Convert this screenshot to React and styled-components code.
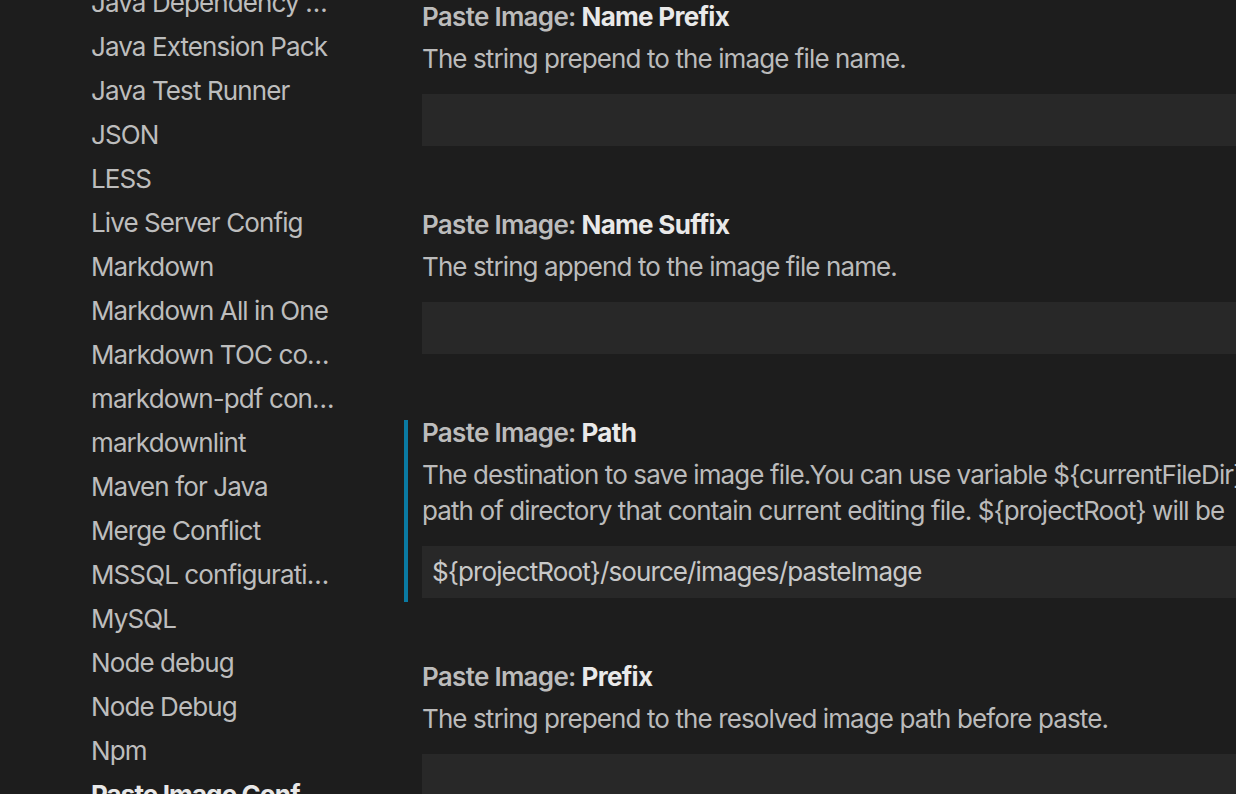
import React from "react";
import styled, { createGlobalStyle } from "styled-components";

const Global = createGlobalStyle`
  html, body { margin: 0; padding: 0; background: #1d1d1d; }
  body { overflow: hidden; font-family: Inter, "Noto Sans", sans-serif; -webkit-font-smoothing: antialiased; letter-spacing: -0.9px; }
`;

const Page = styled.div`
  display: flex;
  width: 1236px;
  height: 794px;
  overflow: hidden;
  background: #1d1d1d;
`;

const Sidebar = styled.nav`
  flex: 0 0 404px;
  box-sizing: border-box;
  padding-left: 91px;
`;

const NavList = styled.ul`
  list-style: none;
  margin: -19px 0 0 0;
  padding: 0;
`;

const NavItem = styled.li`
  height: 44px;
  line-height: 44px;
  font-size: 26px;
  color: ${(p) => (p.$active ? "#e8e8e8" : "#bdbdbd")};
  font-weight: ${(p) => (p.$active ? 700 : 400)};
  white-space: nowrap;
  overflow: hidden;
  max-width: 290px;
`;

const Content = styled.main`
  flex: 1;
  min-width: 0;
  padding-top: 4px;
`;

const Setting = styled.section`
  border-left: 4px solid ${(p) => (p.$focused ? "#0a7aa2" : "transparent")};
  padding: 0 0 4px 14px;
  margin-bottom: 62px;
`;

const Title = styled.div`
  font-size: 26px;
  line-height: 26px;
  white-space: nowrap;
  letter-spacing: -0.7px;
`;

const Category = styled.span`
  color: #bcbcbc;
  font-weight: 600;
`;

const Key = styled.span`
  color: #e9e9e9;
  font-weight: 700;
`;

const Description = styled.p`
  margin: 11px 0 0 0;
  font-size: 26px;
  line-height: 36px;
  color: #bbbbbb;
  white-space: nowrap;
  width: 1000px;
`;

const DescLine = styled.span`
  display: block;
`;

const Input = styled.div`
  margin-top: 17px;
  height: 52px;
  line-height: 52px;
  box-sizing: border-box;
  padding: 0 10px;
  background: #282828;
  color: #c8c8c8;
  font-size: 26px;
  white-space: nowrap;
  width: 1200px;
`;

const navItems = [
  "Java Dependency …",
  "Java Extension Pack",
  "Java Test Runner",
  "JSON",
  "LESS",
  "Live Server Config",
  "Markdown",
  "Markdown All in One",
  "Markdown TOC co…",
  "markdown-pdf con…",
  "markdownlint",
  "Maven for Java",
  "Merge Conflict",
  "MSSQL configurati…",
  "MySQL",
  "Node debug",
  "Node Debug",
  "Npm",
];

const settings = [
  { key: "Name Prefix", desc: ["The string prepend to the image file name."], value: "" },
  { key: "Name Suffix", desc: ["The string append to the image file name."], value: "" },
  {
    key: "Path",
    desc: [
      "The destination to save image file.You can use variable ${currentFileDir}",
      "path of directory that contain current editing file. ${projectRoot} will be",
    ],
    value: "${projectRoot}/source/images/pasteImage",
    focused: true,
  },
  { key: "Prefix", desc: ["The string prepend to the resolved image path before paste."], value: "" },
];

export default function App() {
  return (
    <Page>
      <Global />
      <Sidebar>
        <NavList>
          {navItems.map((n) => (
            <NavItem key={n}>{n}</NavItem>
          ))}
          <NavItem $active>Paste Image Conf</NavItem>
        </NavList>
      </Sidebar>
      <Content>
        {settings.map((s) => (
          <Setting key={s.key} $focused={s.focused}>
            <Title>
              <Category>Paste Image: </Category>
              <Key>{s.key}</Key>
            </Title>
            <Description>
              {s.desc.map((d) => (
                <DescLine key={d}>{d}</DescLine>
              ))}
            </Description>
            <Input>{s.value}</Input>
          </Setting>
        ))}
      </Content>
    </Page>
  );
}
